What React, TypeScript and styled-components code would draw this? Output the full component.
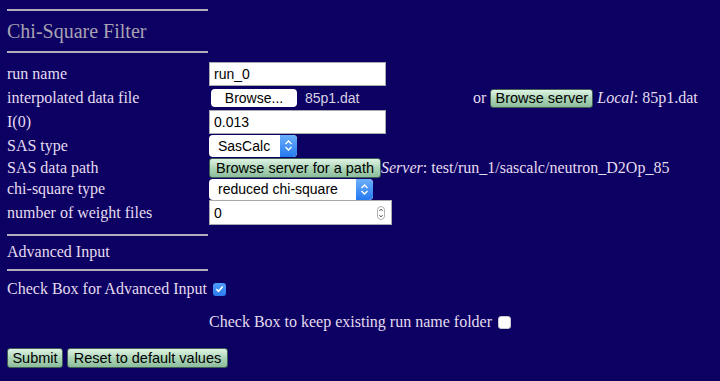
import React from "react";
import styled, { createGlobalStyle } from "styled-components";

const Global = createGlobalStyle`
  html, body { margin: 0; padding: 0; background: #0c0062; }
  body { font-family: "Liberation Serif", "Times New Roman", serif; color: #e4dcef; }
`;

const Page = styled.div`
  width: 720px;
  height: 381px;
  padding: 9px 7px 0;
  box-sizing: border-box;
  background: #0c0062;
`;

const Rule = styled.div<{ $mt?: number }>`
  width: 201px;
  height: 2px;
  background: #b4acbc;
  margin-top: ${(p) => p.$mt ?? 0}px;
`;

const Heading = styled.h3`
  margin: 8px 0;
  font-size: 20px;
  line-height: 24px;
  font-weight: normal;
  color: #a8a2b2;
`;

const Form = styled.div`
  display: flex;
  flex-direction: column;
  margin-top: 9px;
`;

const Row = styled.div<{ $h: number }>`
  display: flex;
  align-items: center;
  height: ${(p) => p.$h}px;
`;

const Label = styled.div`
  width: 202px;
  flex: none;
  font-size: 16px;
  line-height: 18px;
  white-space: nowrap;
`;

const Cell = styled.div<{ $w?: number }>`
  display: flex;
  align-items: center;
  ${(p) => (p.$w ? `width: ${p.$w}px; flex: none;` : "")}
  white-space: nowrap;
`;

const TextBox = styled.div<{ $w: number; $h: number }>`
  width: ${(p) => p.$w}px;
  height: ${(p) => p.$h}px;
  box-sizing: border-box;
  background: #fff;
  border: 1px solid #a9a9b0;
  display: flex;
  align-items: center;
  padding: 0 4px;
  font-family: "Liberation Sans", Arial, sans-serif;
  font-size: 14px;
  color: #000;
  position: relative;
`;

const FileButton = styled.div`
  width: 86px;
  height: 18px;
  margin-left: 2px;
  background: #fff;
  border-radius: 4px;
  display: flex;
  align-items: center;
  justify-content: center;
  font-family: "Liberation Sans", Arial, sans-serif;
  font-size: 14px;
  color: #000;
`;

const FileName = styled.span`
  margin-left: 8px;
  font-family: "Liberation Sans", Arial, sans-serif;
  font-size: 14px;
  color: #d8d0e2;
`;

const GreenButton = styled.button<{ $w: number; $h: number }>`
  width: ${(p) => p.$w}px;
  height: ${(p) => p.$h}px;
  padding: 0;
  margin: 0;
  border: 1px solid #3f5f55;
  border-radius: 3px;
  background: linear-gradient(#dff3e4, #a9d3b5 55%, #8dbd9c);
  font-family: "Liberation Sans", Arial, sans-serif;
  font-size: 14.5px;
  color: #000;
  display: flex;
  align-items: center;
  justify-content: center;
  white-space: nowrap;
`;

const Plain = styled.span<{ $ml?: number }>`
  font-size: 16px;
  color: #e4dcef;
  margin-left: ${(p) => p.$ml ?? 0}px;
  white-space: nowrap;
`;

const Em = styled.em`
  font-style: italic;
`;

const SelectBox = styled.div<{ $w: number; $h: number }>`
  width: ${(p) => p.$w}px;
  height: ${(p) => p.$h}px;
  box-sizing: border-box;
  background: #fff;
  border-radius: 4px;
  display: flex;
  align-items: center;
  justify-content: space-between;
  font-family: "Liberation Sans", Arial, sans-serif;
  font-size: 14px;
  color: #000;
  padding-left: 9px;
  overflow: hidden;
`;

const Arrow = styled.div`
  width: 17px;
  height: 100%;
  background: linear-gradient(#6cb0fb, #2579f0);
  border-radius: 0 4px 4px 0;
  display: flex;
  align-items: center;
  justify-content: center;
`;

const Spinner = styled.svg`
  position: absolute;
  right: 6px;
  top: 50%;
  transform: translateY(-50%);
`;

const Check = styled.div<{ $on: boolean }>`
  width: 13px;
  height: 13px;
  box-sizing: border-box;
  border-radius: 3px;
  margin-left: 6px;
  background: ${(p) => (p.$on ? "linear-gradient(#4f9cf9, #2a7cf0)" : "#fff")};
  border: ${(p) => (p.$on ? "none" : "1px solid #c8c8d0")};
  display: flex;
  align-items: center;
  justify-content: center;
`;

const CheckRow = styled.div<{ $mt: number; $ml?: number }>`
  display: flex;
  align-items: center;
  height: 18px;
  margin-top: ${(p) => p.$mt}px;
  margin-left: ${(p) => p.$ml ?? 0}px;
  font-size: 16px;
`;

const SubTitle = styled.div`
  font-size: 16px;
  line-height: 20px;
  margin: 6px 0 7px;
`;

const Actions = styled.div`
  display: flex;
  gap: 4px;
  margin-top: 17px;
`;

const Chevrons = () => (
  <svg width="9" height="13" viewBox="0 0 9 13">
    <path d="M1.5 5 L4.5 2 L7.5 5" fill="none" stroke="#fff" strokeWidth="1.4" />
    <path d="M1.5 8 L4.5 11 L7.5 8" fill="none" stroke="#fff" strokeWidth="1.4" />
  </svg>
);

const Select = ({ w, h, value }: { w: number; h: number; value: string }) => (
  <SelectBox $w={w} $h={h} role="listbox">
    <span>{value}</span>
    <Arrow>
      <Chevrons />
    </Arrow>
  </SelectBox>
);

export default function App() {
  return (
    <>
      <Global />
      <Page>
        <Rule />
        <Heading>Chi-Square Filter</Heading>
        <Rule />
        <Form>
          <Row $h={24}>
            <Label>run name</Label>
            <TextBox $w={177} $h={24}>run_0</TextBox>
          </Row>
          <Row $h={24}>
            <Label>interpolated data file</Label>
            <Cell $w={264}>
              <FileButton>Browse...</FileButton>
              <FileName>85p1.dat</FileName>
            </Cell>
            <Cell>
              <Plain>or</Plain>
              <GreenButton $w={103} $h={19} style={{ marginLeft: 4 }}>
                Browse server
              </GreenButton>
              <Plain $ml={4}>
                <Em>Local</Em>: 85p1.dat
              </Plain>
            </Cell>
          </Row>
          <Row $h={24}>
            <Label>I(0)</Label>
            <TextBox $w={177} $h={24}>0.013</TextBox>
          </Row>
          <Row $h={23}>
            <Label>SAS type</Label>
            <Select w={88} h={22} value="SasCalc" />
          </Row>
          <Row $h={21}>
            <Label>SAS data path</Label>
            <GreenButton $w={172} $h={20}>Browse server for a path</GreenButton>
            <Plain>
              <Em>Server</Em>: test/run_1/sascalc/neutron_D2Op_85
            </Plain>
          </Row>
          <Row $h={22}>
            <Label>chi-square type</Label>
            <Select w={164} h={21} value="reduced chi-square" />
          </Row>
          <Row $h={25}>
            <Label>number of weight files</Label>
            <TextBox $w={183} $h={25}>
              0
              <Spinner width="8" height="14" viewBox="0 0 8 14">
                <rect x="0.5" y="0.5" width="7" height="13" rx="3.5" fill="#fff" stroke="#b0b0b0" />
                <path d="M2.3 5 L4 3 L5.7 5" fill="none" stroke="#555" strokeWidth="0.9" />
                <path d="M2.3 9 L4 11 L5.7 9" fill="none" stroke="#555" strokeWidth="0.9" />
              </Spinner>
            </TextBox>
          </Row>
        </Form>
        <Rule $mt={9} />
        <SubTitle>Advanced Input</SubTitle>
        <Rule />
        <CheckRow $mt={9}>
          Check Box for Advanced Input
          <Check $on>
            <svg width="9" height="8" viewBox="0 0 9 8">
              <path d="M1.3 4.2 L3.5 6.3 L7.7 1.4" fill="none" stroke="#fff" strokeWidth="1.6" />
            </svg>
          </Check>
        </CheckRow>
        <CheckRow $mt={15} $ml={202}>
          Check Box to keep existing run name folder
          <Check $on={false} />
        </CheckRow>
        <Actions>
          <GreenButton $w={56} $h={20}>Submit</GreenButton>
          <GreenButton $w={161} $h={20}>Reset to default values</GreenButton>
        </Actions>
      </Page>
    </>
  );
}
